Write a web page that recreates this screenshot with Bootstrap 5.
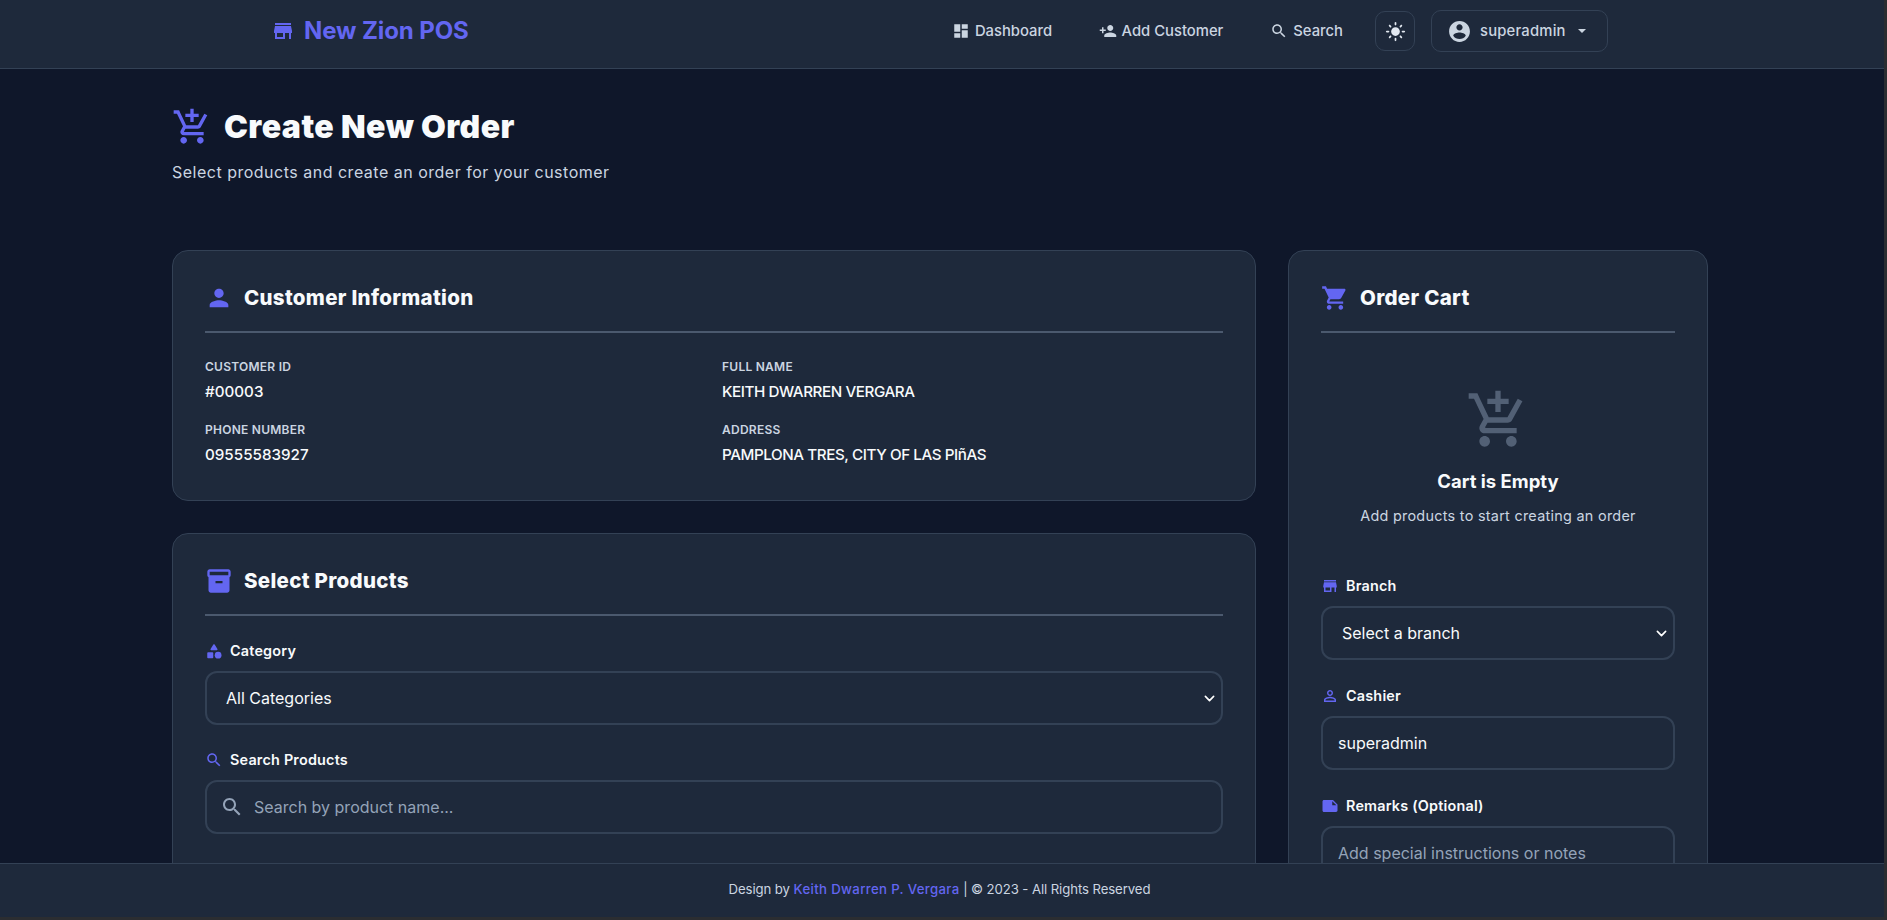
<!DOCTYPE html>
<html lang="en">
<head>
  <meta charset="UTF-8" />
  <title>Create New Order - New Zion POS</title>
  <link href="https://cdn.jsdelivr.net/npm/bootstrap@5.3.6/dist/css/bootstrap.min.css" rel="stylesheet" />
  <style>
    html, body {
      height: 100%;
      overflow: hidden;
      background-color: #2b2d31;
    }
    body {
      font-family: Inter, "Liberation Sans", sans-serif;
      color: #f8fafc;
    }
    .app-shell {
      width: 1884px;
      height: 917px;
      display: flex;
      flex-direction: column;
      background-color: #0f172a;
    }
    .ico {
      fill: currentColor;
      flex-shrink: 0;
      display: block;
    }
    .accent { color: #6366f1; }

    /* top bar */
    .top-bar {
      height: 69px;
      flex-shrink: 0;
      padding: 0 0 6px;
      background-color: #1e293b;
      border-bottom: 1px solid #334155;
    }
    .top-inner {
      width: 1334px;
      margin-left: 274px;
      display: flex;
      align-items: center;
      justify-content: space-between;
    }
    .brand-link {
      display: flex;
      align-items: center;
      gap: 9px;
      padding: 0;
      margin: 0;
      font-size: 24px;
      font-weight: 700;
      letter-spacing: -.1px;
      color: #6366f1;
    }
    .brand-link:hover { color: #6366f1; }
    .brand-link .ico { margin-left: -3px; }
    .top-links {
      display: flex;
      align-items: center;
    }
    .top-link {
      display: flex;
      align-items: center;
      gap: 5px;
      padding: 0;
      font-size: 14.8px;
      font-weight: 500;
      color: #cbd5e1;
    }
    .top-link:hover { color: #cbd5e1; }
    .link-dash { margin-right: 46.5px; }
    .link-add { margin-right: 47px; }
    .link-search { margin-right: 32px; }
    .theme-btn {
      width: 40px;
      height: 40px;
      padding: 0;
      display: flex;
      align-items: center;
      justify-content: center;
      margin-right: 16px;
      color: #e2e8f0;
      border: 1px solid #334155;
      border-radius: 10px;
    }
    .user-btn {
      width: 177px;
      height: 42px;
      padding: 0 0 0 15px;
      display: flex;
      align-items: center;
      gap: 8px;
      font-size: 14.8px;
      letter-spacing: .2px;
      font-weight: 500;
      color: #cbd5e1;
      border: 1px solid #334155;
      border-radius: 10px;
    }
    .user-btn::after {
      margin-left: 4px;
      border-top-width: .28em;
      border-right-width: .28em;
      border-left-width: .28em;
    }

    /* page */
    .page-main {
      flex-grow: 1;
      min-height: 0;
      overflow: hidden;
      padding: 33px 0 0 172px;
    }
    .page-wrap { width: 1536px; }
    .page-head { margin-bottom: 66px; }
    .page-title {
      display: flex;
      align-items: center;
      gap: 12px;
      margin: 0 0 8px;
      height: 50px;
      font-size: 32px;
      font-weight: 900;
      letter-spacing: .45px;
      color: #f8fafc;
    }
    .page-sub {
      margin: 0;
      font-size: 16px;
      line-height: 24px;
      letter-spacing: .5px;
      color: #cbd5e1;
    }
    .page-grid {
      display: grid;
      grid-template-columns: 1084px 420px;
      gap: 32px;
      align-items: start;
    }
    .panel {
      background-color: #1e293b;
      border: 1px solid #334155;
      border-radius: 16px;
      color: #f8fafc;
    }
    .panel + .panel { margin-top: 32px; }
    .panel .card-body { padding: 32px 32px 33px; }
    .panel-head {
      display: flex;
      align-items: center;
      gap: 11px;
      box-sizing: content-box;
      height: 30px;
      padding-bottom: 18px;
      margin-bottom: 24px;
      border-bottom: 2px solid #4b596e;
    }
    .panel-head h5 {
      margin: 0;
      font-size: 20.5px;
      font-weight: 800;
      letter-spacing: .3px;
      color: #f8fafc;
    }

    /* customer info */
    .info-grid {
      display: grid;
      grid-template-columns: 1fr 1fr;
      gap: 17px 16px;
      margin-top: 25px;
    }
    .info-label {
      font-size: 12px;
      line-height: 18px;
      font-weight: 600;
      letter-spacing: .25px;
      text-transform: uppercase;
      color: #cbd5e1;
      margin-bottom: 4px;
    }
    .info-value {
      font-size: 15.2px;
      line-height: 24px;
      font-weight: 500;
      color: #f8fafc;
    }
    .info-caps { letter-spacing: -.42px; }

    /* forms */
    .field { margin-bottom: 24px; }
    .cart-panel .field { margin-bottom: 25px; }
    .field-label {
      display: flex;
      align-items: center;
      gap: 7px;
      margin-bottom: 9px;
      font-size: 14.4px;
      line-height: 22px;
      font-weight: 600;
      letter-spacing: .2px;
      color: #f8fafc;
    }
    .field-input {
      height: 54px;
      padding: 0 15px;
      font-size: 16px;
      color: #f8fafc;
      background-color: #1e293b;
      border: 2px solid #334155;
      border-radius: 12px;
    }
    .field-input:focus {
      color: #f8fafc;
      background-color: #1e293b;
      border-color: #334155;
      box-shadow: none;
    }
    .field-input::placeholder { color: #94a3b8; }
    .form-select.field-input {
      padding-left: 19px;
      background-image: url("data:image/svg+xml,%3csvg xmlns='http://www.w3.org/2000/svg' viewBox='0 0 16 16'%3e%3cpath fill='none' stroke='%23ffffff' stroke-linecap='round' stroke-linejoin='round' stroke-width='2.4' d='m2 5 6 6 6-6'/%3e%3c/svg%3e");
      background-position: right 6px center;
      background-size: 11px 11px;
    }
    .search-box { position: relative; }
    .search-box .ico {
      position: absolute;
      left: 15px;
      top: 15px;
      color: #94a3b8;
    }
    .search-box .field-input { padding-left: 47px; }
    .note-input {
      height: 90px;
      resize: none;
      padding-top: 13px;
    }

    /* empty cart */
    .cart-empty {
      text-align: center;
      padding: 31px 0 48px;
    }
    .cart-empty .ico {
      margin: 0 auto 16px;
      color: #526075;
    }
    .cart-empty h5 {
      margin: 0 0 10px;
      font-size: 18.5px;
      line-height: 27px;
      font-weight: 700;
      color: #f8fafc;
    }
    .cart-empty p {
      margin: 0;
      font-size: 14.4px;
      line-height: 22px;
      letter-spacing: .28px;
      color: #cbd5e1;
    }

    .page-foot {
      height: 54px;
      flex-shrink: 0;
      padding: 0 5px 2px 0;
      display: flex;
      align-items: center;
      justify-content: center;
      background-color: #1e293b;
      border-top: 1px solid #334155;
      font-size: 13.2px;
      letter-spacing: -.1px;
      color: #cbd5e1;
    }
    .page-foot a {
      color: #6366f1;
      font-weight: 500;
      letter-spacing: .35px;
      text-decoration: none;
    }
  </style>
</head>
<body>
  <div class="app-shell">

    <nav class="navbar top-bar">
      <div class="top-inner">
        <a class="navbar-brand brand-link" href="#">
          <svg class="ico" width="24" height="24" viewBox="0 0 24 24"><path d="M20 4H4v2h16V4zm1 10v-2l-1-5H4l-1 5v2h1v6h10v-6h4v6h2v-6h1zm-9 4H6v-4h6v4z"/></svg>
          New Zion POS
        </a>
        <div class="top-links">
          <a class="nav-link top-link link-dash" href="#">
            <svg class="ico" width="18" height="18" viewBox="0 0 24 24"><path d="M3 13h8V3H3v10zm0 8h8v-6H3v6zm10 0h8V11h-8v10zm0-18v6h8V3h-8z"/></svg>
            Dashboard
          </a>
          <a class="nav-link top-link link-add" href="#">
            <svg class="ico" width="18" height="18" viewBox="0 0 24 24"><path d="M15 12c2.21 0 4-1.79 4-4s-1.79-4-4-4-4 1.79-4 4 1.79 4 4 4zm-9-2V7H4v3H1v2h3v3h2v-3h3v-2H6zm9 4c-2.67 0-8 1.34-8 4v2h16v-2c0-2.66-5.33-4-8-4z"/></svg>
            Add Customer
          </a>
          <a class="nav-link top-link link-search" href="#">
            <svg class="ico" width="18" height="18" viewBox="0 0 24 24"><path d="M15.5 14h-.79l-.28-.27C15.41 12.59 16 11.11 16 9.5 16 5.91 13.09 3 9.5 3S3 5.91 3 9.5 5.91 16 9.5 16c1.61 0 3.09-.59 4.23-1.57l.27.28v.79l5 4.99L20.49 19l-4.99-5zm-6 0C7.01 14 5 11.99 5 9.5S7.01 5 9.5 5 14 7.01 14 9.5 11.99 14 9.5 14z"/></svg>
            Search
          </a>
          <button class="btn theme-btn" type="button" aria-label="Toggle theme">
            <svg class="ico" width="21" height="21" viewBox="0 0 24 24"><path d="M12 7c-2.76 0-5 2.24-5 5s2.24 5 5 5 5-2.24 5-5-2.24-5-5-5zM2 13h2c.55 0 1-.45 1-1s-.45-1-1-1H2c-.55 0-1 .45-1 1s.45 1 1 1zm18 0h2c.55 0 1-.45 1-1s-.45-1-1-1h-2c-.55 0-1 .45-1 1s.45 1 1 1zM11 2v2c0 .55.45 1 1 1s1-.45 1-1V2c0-.55-.45-1-1-1s-1 .45-1 1zm0 18v2c0 .55.45 1 1 1s1-.45 1-1v-2c0-.55-.45-1-1-1s-1 .45-1 1zM5.99 4.58c-.39-.39-1.03-.39-1.41 0-.39.39-.39 1.03 0 1.41l1.06 1.06c.39.39 1.03.39 1.41 0s.39-1.03 0-1.41L5.99 4.58zm12.37 12.37c-.39-.39-1.03-.39-1.41 0-.39.39-.39 1.03 0 1.41l1.06 1.06c.39.39 1.03.39 1.41 0 .39-.39.39-1.03 0-1.41l-1.06-1.06zm1.06-10.96c.39-.39.39-1.03 0-1.41-.39-.39-1.03-.39-1.41 0l-1.06 1.06c-.39.39-.39 1.03 0 1.41s1.03.39 1.41 0l1.06-1.06zM7.05 18.36c.39-.39.39-1.03 0-1.41-.39-.39-1.03-.39-1.41 0l-1.06 1.06c-.39.39-.39 1.03 0 1.41s1.03.39 1.41 0l1.06-1.06z"/></svg>
          </button>
          <button class="btn dropdown-toggle user-btn" type="button" data-bs-toggle="dropdown">
            <svg class="ico" width="25" height="25" viewBox="0 0 24 24"><path d="M12 2C6.48 2 2 6.48 2 12s4.48 10 10 10 10-4.48 10-10S17.52 2 12 2zm0 3c1.66 0 3 1.34 3 3s-1.34 3-3 3-3-1.34-3-3 1.34-3 3-3zm0 14.2c-2.5 0-4.71-1.28-6-3.22.03-1.99 4-3.08 6-3.08 1.99 0 5.97 1.09 6 3.08-1.29 1.94-3.5 3.22-6 3.22z"/></svg>
            superadmin
          </button>
        </div>
      </div>
    </nav>

    <main class="page-main">
      <div class="page-wrap">
        <div class="page-head">
          <h1 class="page-title">
            <svg class="ico accent" width="40" height="40" viewBox="0 0 24 24"><path d="M11 9h2V6h3V4h-3V1h-2v3H8v2h3v3zm-4 9c-1.1 0-1.99.9-1.99 2S5.9 22 7 22s2-.9 2-2-.9-2-2-2zm10 0c-1.1 0-1.99.9-1.99 2s.89 2 1.99 2 2-.9 2-2-.9-2-2-2zm-9.83-3.25l.03-.12.9-1.63h7.45c.75 0 1.41-.41 1.75-1.03l3.86-7.01L19.42 4h-.01l-1.1 2-2.76 5H8.53l-.13-.27L6.16 6l-.95-2-.94-2H1v2h2l3.6 7.59-1.35 2.45c-.16.28-.25.61-.25.96 0 1.1.9 2 2 2h12v-2H7.42c-.13 0-.25-.11-.25-.25z"/></svg>
            Create New Order
          </h1>
          <p class="page-sub">Select products and create an order for your customer</p>
        </div>

        <div class="page-grid">
          <div>
            <div class="card panel">
              <div class="card-body">
                <div class="panel-head mb-0">
                  <svg class="ico accent" width="28" height="28" viewBox="0 0 24 24"><path d="M12 12c2.21 0 4-1.79 4-4s-1.79-4-4-4-4 1.79-4 4 1.79 4 4 4zm0 2c-2.67 0-8 1.34-8 4v2h16v-2c0-2.66-5.33-4-8-4z"/></svg>
                  <h5>Customer Information</h5>
                </div>
                <div class="info-grid">
                  <div>
                    <div class="info-label">Customer ID</div>
                    <div class="info-value">#00003</div>
                  </div>
                  <div>
                    <div class="info-label">Full Name</div>
                    <div class="info-value info-caps">KEITH DWARREN VERGARA</div>
                  </div>
                  <div>
                    <div class="info-label">Phone Number</div>
                    <div class="info-value">09555583927</div>
                  </div>
                  <div>
                    <div class="info-label">Address</div>
                    <div class="info-value info-caps">PAMPLONA TRES, CITY OF LAS PIñAS</div>
                  </div>
                </div>
              </div>
            </div>

            <div class="card panel">
              <div class="card-body">
                <div class="panel-head">
                  <svg class="ico accent" width="28" height="28" viewBox="0 0 24 24"><path d="M20 2H4c-1 0-2 .9-2 2v3.01c0 .72.43 1.34 1 1.69V20c0 1.1 1.1 2 2 2h14c.9 0 2-.9 2-2V8.7c.57-.35 1-.97 1-1.69V4c0-1.1-1-2-2-2zm-5 12H9v-2h6v2zm5-7H4V4l16-.02V7z"/></svg>
                  <h5>Select Products</h5>
                </div>
                <div class="field">
                  <label class="form-label field-label">
                    <svg class="ico accent" width="18" height="18" viewBox="0 0 24 24"><path d="M11.15 3.4L7.43 9.48c-.41.66.07 1.52.85 1.52h7.43c.78 0 1.26-.86.85-1.52L12.85 3.4c-.39-.64-1.31-.64-1.7 0z"/><circle cx="17.5" cy="17.5" r="4.5"/><path d="M4 21.5h6c.55 0 1-.45 1-1v-6c0-.55-.45-1-1-1H4c-.55 0-1 .45-1 1v6c0 .55.45 1 1 1z"/></svg>
                    Category
                  </label>
                  <select class="form-select field-input">
                    <option>All Categories</option>
                  </select>
                </div>
                <div class="field">
                  <label class="form-label field-label">
                    <svg class="ico accent" width="18" height="18" viewBox="0 0 24 24"><path d="M15.5 14h-.79l-.28-.27C15.41 12.59 16 11.11 16 9.5 16 5.91 13.09 3 9.5 3S3 5.91 3 9.5 5.91 16 9.5 16c1.61 0 3.09-.59 4.23-1.57l.27.28v.79l5 4.99L20.49 19l-4.99-5zm-6 0C7.01 14 5 11.99 5 9.5S7.01 5 9.5 5 14 7.01 14 9.5 11.99 14 9.5 14z"/></svg>
                    Search Products
                  </label>
                  <div class="search-box">
                    <svg class="ico" width="24" height="24" viewBox="0 0 24 24"><path d="M15.5 14h-.79l-.28-.27C15.41 12.59 16 11.11 16 9.5 16 5.91 13.09 3 9.5 3S3 5.91 3 9.5 5.91 16 9.5 16c1.61 0 3.09-.59 4.23-1.57l.27.28v.79l5 4.99L20.49 19l-4.99-5zm-6 0C7.01 14 5 11.99 5 9.5S7.01 5 9.5 5 14 7.01 14 9.5 11.99 14 9.5 14z"/></svg>
                    <input type="text" class="form-control field-input" placeholder="Search by product name..." />
                  </div>
                </div>
              </div>
            </div>
          </div>

          <div class="card panel cart-panel">
            <div class="card-body">
              <div class="panel-head">
                <svg class="ico accent" width="28" height="28" viewBox="0 0 24 24"><path d="M7 18c-1.1 0-1.99.9-1.99 2S5.9 22 7 22s2-.9 2-2-.9-2-2-2zM1 2v2h2l3.6 7.59-1.35 2.45c-.16.28-.25.61-.25.96 0 1.1.9 2 2 2h12v-2H7.42c-.14 0-.25-.11-.25-.25l.03-.12.9-1.63h7.45c.75 0 1.41-.41 1.75-1.03l3.58-6.49c.08-.14.12-.31.12-.48 0-.55-.45-1-1-1H5.21l-.94-2H1zm16 16c-1.1 0-1.99.9-1.99 2s.89 2 1.99 2 2-.9 2-2-.9-2-2-2z"/></svg>
                <h5>Order Cart</h5>
              </div>
              <div class="cart-empty">
                <svg class="ico" width="64" height="64" viewBox="0 0 24 24"><path d="M11 9h2V6h3V4h-3V1h-2v3H8v2h3v3zm-4 9c-1.1 0-1.99.9-1.99 2S5.9 22 7 22s2-.9 2-2-.9-2-2-2zm10 0c-1.1 0-1.99.9-1.99 2s.89 2 1.99 2 2-.9 2-2-.9-2-2-2zm-9.83-3.25l.03-.12.9-1.63h7.45c.75 0 1.41-.41 1.75-1.03l3.86-7.01L19.42 4h-.01l-1.1 2-2.76 5H8.53l-.13-.27L6.16 6l-.95-2-.94-2H1v2h2l3.6 7.59-1.35 2.45c-.16.28-.25.61-.25.96 0 1.1.9 2 2 2h12v-2H7.42c-.13 0-.25-.11-.25-.25z"/></svg>
                <h5>Cart is Empty</h5>
                <p>Add products to start creating an order</p>
              </div>
              <div class="field">
                <label class="form-label field-label">
                  <svg class="ico accent" width="18" height="18" viewBox="0 0 24 24"><path d="M20 4H4v2h16V4zm1 10v-2l-1-5H4l-1 5v2h1v6h10v-6h4v6h2v-6h1zm-9 4H6v-4h6v4z"/></svg>
                  Branch
                </label>
                <select class="form-select field-input">
                  <option>Select a branch</option>
                </select>
              </div>
              <div class="field">
                <label class="form-label field-label">
                  <svg class="ico accent" width="18" height="18" viewBox="0 0 24 24"><path d="M12 5.9c1.16 0 2.1.94 2.1 2.1s-.94 2.1-2.1 2.1S9.9 9.16 9.9 8s.94-2.1 2.1-2.1m0 9c2.97 0 6.1 1.46 6.1 2.1v1.1H5.9V17c0-.64 3.13-2.1 6.1-2.1M12 4C9.79 4 8 5.79 8 8s1.79 4 4 4 4-1.79 4-4-1.79-4-4-4zm0 9c-2.67 0-8 1.34-8 4v3h16v-3c0-2.66-5.33-4-8-4z"/></svg>
                  Cashier
                </label>
                <input type="text" class="form-control field-input" value="superadmin" />
              </div>
              <div class="field">
                <label class="form-label field-label">
                  <svg class="ico accent" width="18" height="18" viewBox="0 0 24 24"><path d="M22 10l-6-6H4c-1.1 0-2 .9-2 2v12.01c0 1.1.9 1.99 2 1.99l16-.01c1.1 0 2-.89 2-1.99v-8zm-7-4.5l5.5 5.5H15V5.5z"/></svg>
                  Remarks (Optional)
                </label>
                <textarea class="form-control field-input note-input" placeholder="Add special instructions or notes"></textarea>
              </div>
            </div>
          </div>
        </div>
      </div>
    </main>

    <footer class="page-foot">
      <span>Design by <a href="#">Keith Dwarren P. Vergara</a> | © 2023 - All Rights Reserved</span>
    </footer>

  </div>
</body>
</html>
